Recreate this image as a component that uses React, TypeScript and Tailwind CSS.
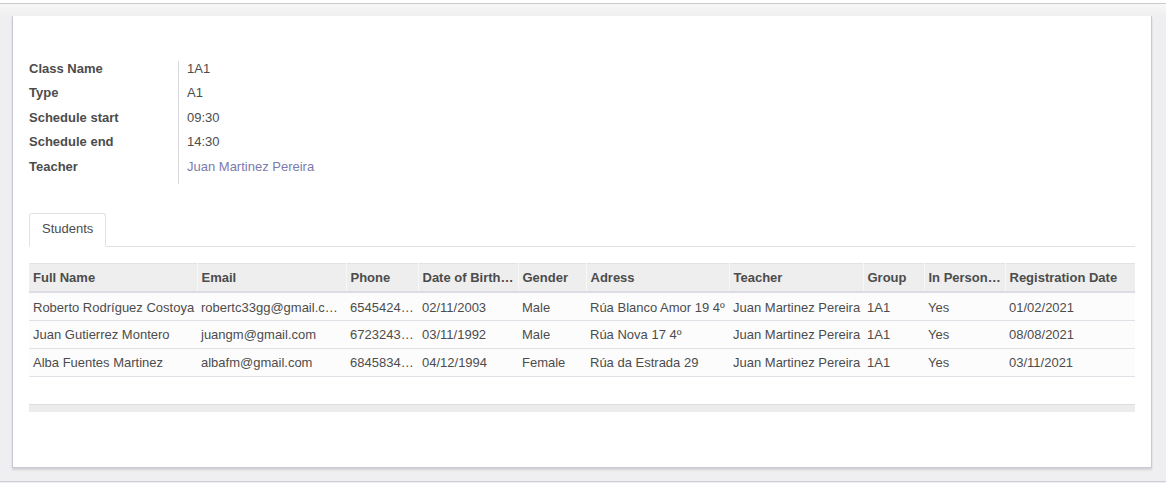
import React from 'react';

interface Student {
  name: string;
  email: string;
  phone: string;
  birth: string;
  gender: string;
  address: string;
  teacher: string;
  group: string;
  inPerson: string;
  registered: string;
}

const fields: [string, string, boolean?][] = [
  ['Class Name', '1A1'],
  ['Type', 'A1'],
  ['Schedule start', '09:30'],
  ['Schedule end', '14:30'],
  ['Teacher', 'Juan Martinez Pereira', true],
];

const columns: [string, number][] = [
  ['Full Name', 168],
  ['Email', 149],
  ['Phone', 72],
  ['Date of Birthday', 100],
  ['Gender', 68],
  ['Adress', 143],
  ['Teacher', 134],
  ['Group', 61],
  ['In Person Class', 81],
  ['Registration Date', 130],
];

const students: Student[] = [
  {
    name: 'Roberto Rodríguez Costoya',
    email: 'robertc33gg@gmail.com',
    phone: '654542478',
    birth: '02/11/2003',
    gender: 'Male',
    address: 'Rúa Blanco Amor 19 4º',
    teacher: 'Juan Martinez Pereira',
    group: '1A1',
    inPerson: 'Yes',
    registered: '01/02/2021',
  },
  {
    name: 'Juan Gutierrez Montero',
    email: 'juangm@gmail.com',
    phone: '672324356',
    birth: '03/11/1992',
    gender: 'Male',
    address: 'Rúa Nova 17 4º',
    teacher: 'Juan Martinez Pereira',
    group: '1A1',
    inPerson: 'Yes',
    registered: '08/08/2021',
  },
  {
    name: 'Alba Fuentes Martinez',
    email: 'albafm@gmail.com',
    phone: '684583412',
    birth: '04/12/1994',
    gender: 'Female',
    address: 'Rúa da Estrada 29',
    teacher: 'Juan Martinez Pereira',
    group: '1A1',
    inPerson: 'Yes',
    registered: '03/11/2021',
  },
];

export default function App() {
  return (
    <div
      className="min-h-[483px] bg-[#efeff1] text-[13px] text-[#4c4c4c]"
      style={{ fontFamily: '"Liberation Sans", Arial, sans-serif' }}
    >
      {/* Control panel strip */}
      <div className="h-[3px] bg-white" />
      <div className="h-[13px] border-t border-[#cbcbcf] bg-gradient-to-b from-[#f7f7f7] to-[#efefef]" />

      {/* Form sheet */}
      <div className="ml-[12px] mr-[14px] h-[452px] border border-t-0 border-[#c9c9d6] bg-white px-[16px] pt-[40px] shadow-[0_2px_2px_rgba(0,0,0,0.12)]">
        {/* Fields */}
        <div className="flex">
          <div className="w-[149px] font-bold">
            {fields.map(([label]) => (
              <div key={label} className="flex h-[24.5px] items-center">
                {label}
              </div>
            ))}
          </div>
          <div className="mt-[5px] border-l border-[#d8d8de] pb-[5px] pl-[8px]">
            <div className="-mt-[5px]">
              {fields.map(([label, value, link]) => (
                <div
                  key={label}
                  className={`flex h-[24.5px] items-center ${link ? 'text-[#7c7bad]' : ''}`}
                >
                  {value}
                </div>
              ))}
            </div>
          </div>
        </div>

        {/* Tabs */}
        <div className="mt-[29px] flex border-b border-[#dee2e6]">
          <div className="-mb-px flex h-[34px] items-center rounded-t-[3px] border border-b-white border-[#dee2e6] bg-white px-[12px] pb-[2px]">
            Students
          </div>
        </div>

        {/* One2many list */}
        <table className="mt-[16px] w-full table-fixed border-collapse">
          <colgroup>
            {columns.map(([name, w]) => (
              <col key={name} style={{ width: w }} />
            ))}
          </colgroup>
          <thead>
            <tr className="h-[29px] border-t border-b-2 border-t-[#e2e2e2] border-b-[#dcdce2] bg-[#eeeeee]">
              {columns.map(([name], i) => (
                <th
                  key={name}
                  className={`truncate pl-[4px] text-left font-bold ${i === 8 ? 'pr-[2px]' : 'pr-[4px]'} ${i > 0 ? 'border-l border-[#f8f8f8]' : ''}`}
                >
                  {name}
                </th>
              ))}
            </tr>
          </thead>
          <tbody>
            {students.map((s) => (
              <tr key={s.name} className="h-[28px] border-b border-[#dee2e6] bg-[#fcfcfc]">
                {[
                  s.name,
                  s.email,
                  s.phone,
                  s.birth,
                  s.gender,
                  s.address,
                  s.teacher,
                  s.group,
                  s.inPerson,
                  s.registered,
                ].map((v, i) => (
                  <td
                    key={i}
                    className={`truncate whitespace-nowrap pl-[4px] pt-[2px] ${i === 1 || i === 2 ? 'pr-[4px]' : 'pr-0'}`}
                  >
                    {v}
                  </td>
                ))}
              </tr>
            ))}
          </tbody>
        </table>

        {/* Horizontal scrollbar track */}
        <div className="mt-[27px] h-[8px] border-t border-[#dddddd] bg-[#ececec]" />
      </div>

      <div className="mt-[13px] border-b border-[#d0d0d4]" />
    </div>
  );
}
